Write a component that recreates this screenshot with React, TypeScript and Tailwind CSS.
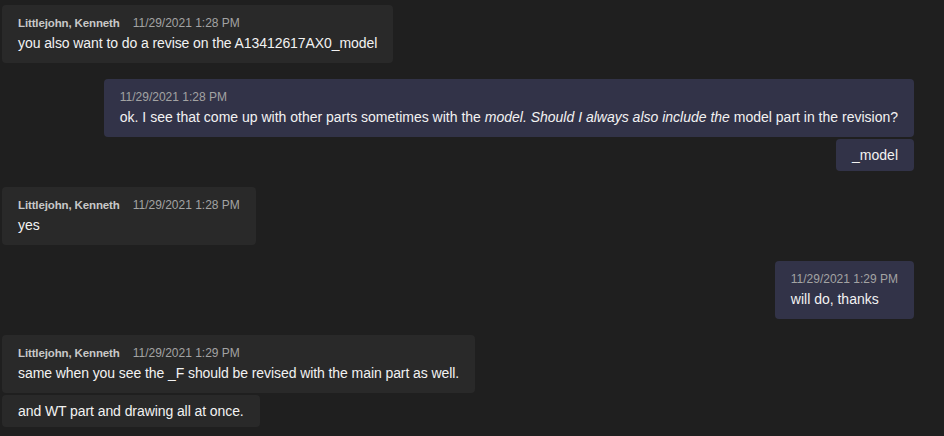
import React from 'react';

type Msg = {
  mine: boolean;
  author?: string;
  time: string;
  parts: React.ReactNode[];
};

const messages: Msg[] = [
  {
    mine: false,
    author: 'Littlejohn, Kenneth',
    time: '11/29/2021 1:28 PM',
    parts: ['you also want to do a revise on the A13412617AX0_model'],
  },
  {
    mine: true,
    time: '11/29/2021 1:28 PM',
    parts: [
      <>
        ok. I see that come up with other parts sometimes with the{' '}
        <em>model. Should I always also include the</em> model part in the revision?
      </>,
      '_model',
    ],
  },
  {
    mine: false,
    author: 'Littlejohn, Kenneth',
    time: '11/29/2021 1:28 PM',
    parts: ['yes'],
  },
  {
    mine: true,
    time: '11/29/2021 1:29 PM',
    parts: ['will do, thanks'],
  },
  {
    mine: false,
    author: 'Littlejohn, Kenneth',
    time: '11/29/2021 1:29 PM',
    parts: [
      'same when you see the _F should be revised with the main part as well.',
      'and WT part and drawing all at once.',
    ],
  },
];

function Group({ msg }: { msg: Msg }) {
  const bubble = msg.mine ? 'bg-[#323348]' : 'bg-[#292929]';
  return (
    <div className={`flex flex-col gap-[2px] ${msg.mine ? 'items-end' : 'items-start'}`}>
      {msg.parts.map((p, i) => (
        <div
          key={i}
          className={`${bubble} rounded-[4px] px-4 ${i === 0 ? 'pt-2 pb-[10px]' : 'py-[6px]'}`}
        >
          {i === 0 && (
            <div className="flex items-center h-5 text-[12px] leading-5">
              {msg.author && (
                <span className="font-bold text-[11.5px] tracking-[-0.13px] text-[#c8c8c8] mr-[13px]">
                  {msg.author}
                </span>
              )}
              <span className="text-[#a3a3a3]">{msg.time}</span>
            </div>
          )}
          <div
            className={`text-[14px] leading-5 text-[#f2f2f2] whitespace-nowrap ${
              msg.mine ? '' : 'tracking-[-0.08px]'
            }`}
          >
            {p}
          </div>
        </div>
      ))}
    </div>
  );
}

export default function App() {
  return (
    <div className="w-[944px] h-[436px] overflow-hidden bg-[#1f1f1f] font-['Liberation_Sans',sans-serif]">
      <div className="flex flex-col gap-4 pt-[5px] pl-[2px] pr-[30px]">
        {messages.map((m, i) => (
          <Group key={i} msg={m} />
        ))}
      </div>
    </div>
  );
}
